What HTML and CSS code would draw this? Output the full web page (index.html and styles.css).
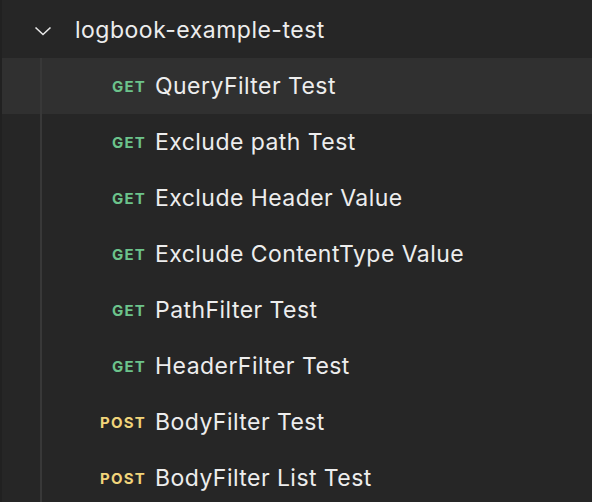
FILE: index.html
```html
<!DOCTYPE html>
<html>
<head>
<meta charset="utf-8">
<link rel="stylesheet" href="styles.css">
</head>
<body>
<div class="tree">
  <div class="folder">
    <span class="chev"><svg width="18" height="10" viewBox="0 0 18 10"><path d="M1.5 1.5 L9 8.5 L16.5 1.5" fill="none" stroke="#e8e8e8" stroke-width="1.6"/></svg></span>
    <span class="fname">logbook-example-test</span>
  </div>
  <div class="children">
    <div class="row active"><span class="m get">GET</span><span class="t">QueryFilter Test</span></div>
    <div class="row"><span class="m get">GET</span><span class="t">Exclude path Test</span></div>
    <div class="row"><span class="m get">GET</span><span class="t">Exclude Header Value</span></div>
    <div class="row"><span class="m get">GET</span><span class="t">Exclude ContentType Value</span></div>
    <div class="row"><span class="m get">GET</span><span class="t">PathFilter Test</span></div>
    <div class="row"><span class="m get">GET</span><span class="t">HeaderFilter Test</span></div>
    <div class="row"><span class="m post">POST</span><span class="t">BodyFilter Test</span></div>
    <div class="row"><span class="m post">POST</span><span class="t">BodyFilter List Test</span></div>
  </div>
</div>
</body>
</html>
```
FILE: styles.css
```css
html, body { margin: 0; padding: 0; }
body {
  background: #212121;
  width: 592px;
  height: 502px;
  overflow: hidden;
  font-family: Inter, "Noto Sans", sans-serif;
}
.tree {
  margin-left: 2px;
  background: #262626;
  height: 502px;
  padding-top: 2px;
  box-sizing: border-box;
}
.folder {
  height: 56px;
  display: flex;
  align-items: center;
  padding-left: 32px;
}
.chev { width: 18px; height: 10px; display: flex; margin-right: 23px; margin-top: 1px; }
.fname { color: #ededed; font-size: 23px; letter-spacing: 0.5px; }
.children { position: relative; }
.children::before {
  content: "";
  position: absolute;
  left: 38px; top: 0; bottom: 0;
  width: 2px;
  background: #383838;
  z-index: 1;
}
.row {
  height: 56px;
  display: flex;
  align-items: center;
}
.row.active { background: #303030; }
.m {
  width: 144px;
  text-align: right;
  font-size: 15px;
  font-weight: 700;
  margin-right: 9px;
  letter-spacing: 1.2px;
}
.get { color: #6cc38b; }
.post { color: #f1d47a; }
.t { color: #ededed; font-size: 23px; letter-spacing: 0.45px; }
```
